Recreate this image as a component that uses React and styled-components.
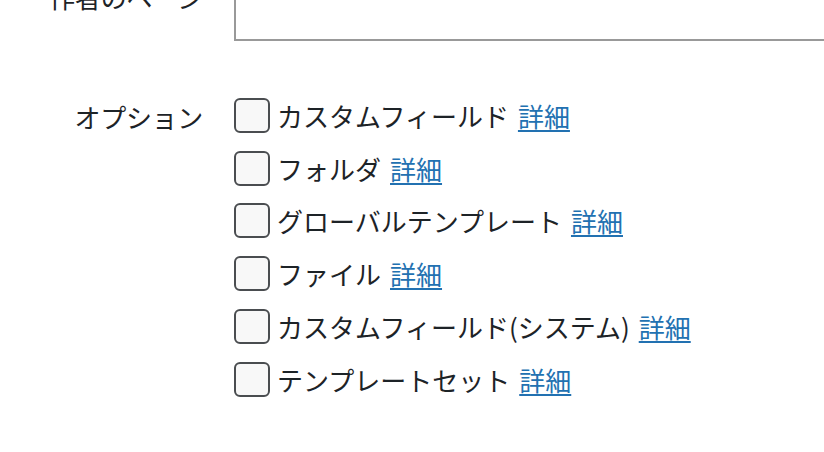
import React from "react";
import styled, { createGlobalStyle } from "styled-components";

const GlobalStyle = createGlobalStyle`
    html, body {
        margin: 0;
        padding: 0;
        background: #ffffff;
        overflow: hidden;
    }
    body {
        font-family: "Noto Sans CJK JP", "Noto Sans", sans-serif;
        color: #1d2327;
    }
`;

const Page = styled.div`
    width: 824px;
    height: 452px;
    overflow: hidden;
`;

const FormTable = styled.div`
    display: grid;
    grid-template-columns: 234px 1fr;
    margin-top: -60px;
`;

const Label = styled.div`
    text-align: right;
    padding-right: 31px;
    padding-top: ${({ $top }) => $top}px;
    font-size: 26px;
    line-height: 39px;
    letter-spacing: -0.3px;
`;

const Field = styled.div`
    padding-top: ${({ $top }) => $top}px;
`;

const TextArea = styled.textarea`
    display: block;
    box-sizing: border-box;
    width: 620px;
    height: 101px;
    border: 2px solid #999999;
    border-radius: 0;
    background: #ffffff;
    resize: none;
    margin: 0;
`;

const OptionList = styled.div`
    display: flex;
    flex-direction: column;
`;

const OptionRow = styled.label`
    display: flex;
    align-items: center;
    height: 52.8px;
    font-size: 26px;
    line-height: 39px;
    white-space: nowrap;
`;

const Check = styled.input.attrs({ type: "checkbox" })`
    appearance: none;
    -webkit-appearance: none;
    box-sizing: border-box;
    width: 36px;
    height: 35px;
    margin: 0 7px 0 0;
    border: 2px solid #4a4d50;
    border-radius: 6px;
    background: #f8f8f8;
    flex-shrink: 0;
`;

const Detail = styled.a`
    color: #2271b1;
    text-decoration: underline;
    text-underline-offset: 3px;
    text-decoration-thickness: 2px;
    margin-left: 9px;
`;

const options = [
    "カスタムフィールド",
    "フォルダ",
    "グローバルテンプレート",
    "ファイル",
    "カスタムフィールド(システム)",
    "テンプレートセット",
];

const App = () => {
    return (
        <Page>
            <GlobalStyle />
            <FormTable>
                <Label $top={37}>作者のページ</Label>
                <Field $top={0}>
                    <TextArea />
                </Field>
                <Label $top={56}>オプション</Label>
                <Field $top={48}>
                    <OptionList>
                        {options.map((name, i) => (
                            <OptionRow key={i}>
                                <Check />
                                {name}
                                <Detail href="#">詳細</Detail>
                            </OptionRow>
                        ))}
                    </OptionList>
                </Field>
            </FormTable>
        </Page>
    );
};

export default App;
